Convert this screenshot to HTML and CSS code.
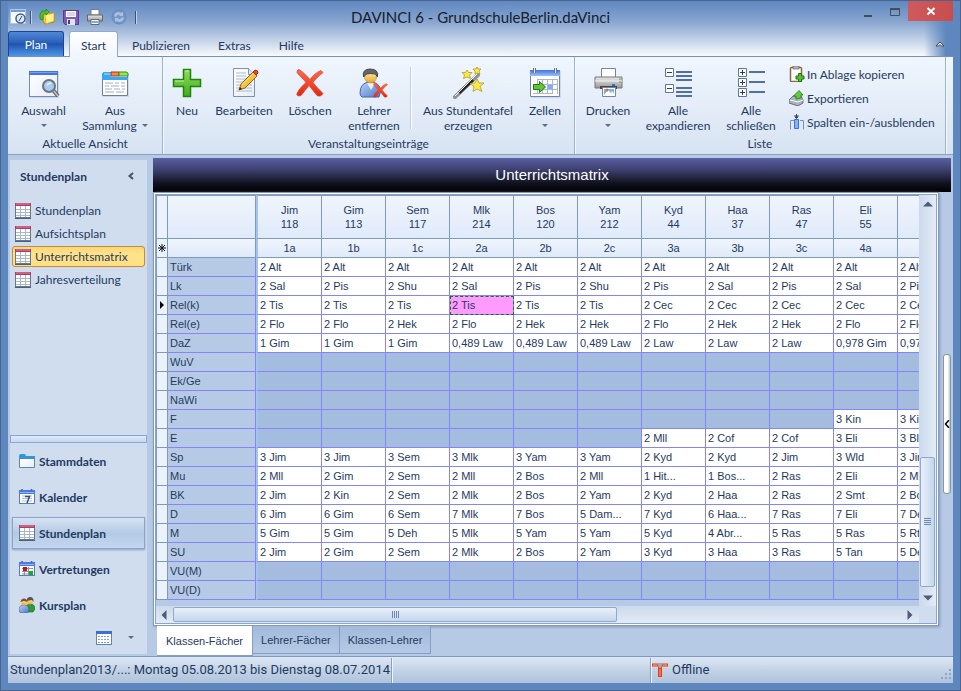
FILE: index.html
```html
<!DOCTYPE html>
<html lang="de">
<head>
<meta charset="utf-8">
<title>DAVINCI 6 - GrundschuleBerlin.daVinci</title>
<link rel="stylesheet" href="styles.css">
</head>
<body>
<svg class="defs" aria-hidden="true">
  <defs>
    <linearGradient id="gBlue" x1="0" y1="0" x2="0" y2="1"><stop offset="0" stop-color="#3f74dc"/><stop offset="1" stop-color="#9cc0fa"/></linearGradient>
    <linearGradient id="gPaper" x1="0" y1="0" x2="1" y2="1"><stop offset="0" stop-color="#fff"/><stop offset="1" stop-color="#e6edf7"/></linearGradient>
    <linearGradient id="gGreen" x1="0" y1="0" x2="0" y2="1"><stop offset="0" stop-color="#8fdc5c"/><stop offset="1" stop-color="#3fae1c"/></linearGradient>
    <linearGradient id="gRed" x1="0" y1="0" x2="0" y2="1"><stop offset="0" stop-color="#ff6a4c"/><stop offset="1" stop-color="#e02a10"/></linearGradient>
    <linearGradient id="gGrey" x1="0" y1="0" x2="0" y2="1"><stop offset="0" stop-color="#e8e8e8"/><stop offset="1" stop-color="#9a9a9a"/></linearGradient>
    <linearGradient id="gFace" x1="0" y1="0" x2="0" y2="1"><stop offset="0" stop-color="#fff0a8"/><stop offset="1" stop-color="#eba52c"/></linearGradient>
    <linearGradient id="gCoat" x1="0" y1="0" x2="1" y2="1"><stop offset="0" stop-color="#b9d2fa"/><stop offset="1" stop-color="#4c78c8"/></linearGradient>
  </defs>
  <symbol id="table" viewBox="0 0 16 16">
    <rect x=".5" y=".5" width="15" height="14" fill="#fff" stroke="#66788f"/>
    <path d="M0 0h16v3H0z" fill="#b33a62"/><path d="M1 1h14" stroke="#de8ba6"/>
    <path d="M1 6.500h14M1 9.500h14M1 12.500h14M5.500 3v11M10.500 3v11" stroke="#aab7cb"/>
    <path d="M0 15.500h16" stroke="#4d6078"/>
  </symbol>
  <symbol id="calmini" viewBox="0 0 16 16">
    <rect x=".5" y="1.500" width="15" height="13" fill="#fff" stroke="#5c7cae"/>
    <path d="M0 1h16v4H0z" fill="#4a7be0"/><path d="M1 3.500h14" stroke="#8fb4fa"/>
    <path d="M3 1.500v-1.500M12.500 1.500v-1.500" stroke="#4c6488" stroke-width="1.500"/>
  </symbol>
  <symbol id="x" viewBox="0 0 28 28">
    <path d="M3 1C8 4 11 8 14 11C17 7 20 4 25 2L27 4C22 8 19 11 17 14C20 18 24 22 27 25C25 28 23 28 21 27C18 24 16 20 13 17C10 20 8 24 5 27C3 28 0 27 1 25C3 20 7 17 10 14C7 10 4 8 1 4Q1 1 3 1Z" fill="url(#gRed)" stroke="#dc3a20" stroke-width=".7"/>
  </symbol>
</svg>

<div class="window">
  <header class="titlebar">
    <div class="quick">
      <button aria-label="Ansicht"><svg width="16" height="16" viewBox="0 0 16 16"><rect x=".5" y=".5" width="15" height="14" fill="#f4faff" stroke="#a8c8ea"/><path d="M1 1h14v2H1z" fill="#6f9fe0"/><circle cx="10.500" cy="9.500" r="4.500" fill="#dcecff" stroke="#4e5e74" stroke-width="1.500"/><path d="M9 12l3-5" stroke="#33455d"/></svg></button>
      <span class="qsep"></span>
      <button aria-label="Öffnen"><svg width="16" height="16" viewBox="0 0 16 16"><path d="M4 3h6l1 2h4v8l-9 2-2-3z" fill="#f2d33a" stroke="#a88a10"/><path d="M6 6l9-2v8l-8 3z" fill="#fff28c" stroke="#c7a51b" stroke-width=".7"/><path d="M1 10V5l2-3h4V0l3 3-3 3V4L4 6v5z" fill="#4fc22c" stroke="#237c10" stroke-width=".7"/></svg></button>
      <button aria-label="Speichern"><svg width="16" height="16" viewBox="0 0 16 16"><path d="M.5 1.500h15v14H2l-1.500-2z" fill="#7e5bb5" stroke="#563a8c"/><path d="M3 2h10v6H3z" fill="#fff"/><path d="M4 4h8M4 6h8" stroke="#b8a9d4"/><path d="M4 10h8v6H4z" fill="#dfe3ea"/><path d="M5 11h2v4H5z" fill="#4b3a78"/></svg></button>
      <button aria-label="Drucken"><svg width="16" height="16" viewBox="0 0 16 16"><path d="M4 .5h8V6H4z" fill="#fff" stroke="#778"/><path d="M.5 6h15v6H.5z" fill="url(#gGrey)" stroke="#666"/><path d="M4 10.500h8v5H4z" fill="#fff" stroke="#667"/><path d="M5 13h6" stroke="#78aee0" stroke-width="2"/></svg></button>
      <button aria-label="Aktualisieren" disabled><svg width="16" height="16" viewBox="0 0 16 16"><circle cx="8" cy="8" r="7" fill="#7596c4" stroke="#6687b8"/><path d="M3 7q1-4 5-4l2 1 2-1v4H8l1-1Q6 5 5 8zM13 9q-1 4-5 4l-2-1-2 1V9h4l-1 1q3 1 4-2z" fill="#a9c0df"/></svg></button>
      <span class="qsep"></span>
    </div>
    <h1>DAVINCI 6 - GrundschuleBerlin.daVinci</h1>
    <div class="winbtns">
      <button aria-label="Minimieren"><svg width="10" height="12"><path d="M1 10h8v2H1z" fill="#454d59"/></svg></button>
      <button aria-label="Maximieren"><svg width="10" height="12"><path d="M.5 4v6.500h9V4" fill="none" stroke="#454d59"/><path d="M0 3h10v2H0z" fill="#454d59"/></svg></button>
      <button class="close" aria-label="Schließen"><svg width="10" height="10"><path d="M1.500 2l7 6.500M8.500 2l-7 6.500" stroke="#fff" stroke-width="2"/></svg></button>
    </div>
  </header>

  <nav class="tabs">
    <button class="plan">Plan</button>
    <button class="tab active">Start</button>
    <button class="tab">Publizieren</button>
    <button class="tab">Extras</button>
    <button class="tab">Hilfe</button>
    <button class="fold" aria-label="Menüband minimieren"><svg width="10" height="8"><path d="M1 6l4-4 4 4H6.500L5 4.500 3.500 6z" fill="#fff" stroke="#3b4756"/></svg></button>
  </nav>

  <section class="ribbon">
    <div class="group view">
      <div class="tools">
        <button class="tool"><svg width="32" height="32" viewBox="0 0 32 32"><path d="M2 4h29v27H2z" fill="#b8c4d4" opacity=".5"/><rect x="1.500" y="4.500" width="28" height="25" fill="url(#gPaper)" stroke="#6f8cc0"/><path d="M1 4h29v4H1z" fill="#4474dc"/><path d="M2 5.500h27" stroke="#79a0f0"/><path d="M25 23l5 6" stroke="#66686c" stroke-width="4"/><path d="M25 23l5 6" stroke="#c0c2c6" stroke-width="1.500"/><circle cx="21" cy="19" r="6" fill="#a8ccf0" stroke="#6d747e" stroke-width="2"/><path d="M18 19q2-5 6-3z" fill="#eef7ff"/></svg><span>Auswahl</span><i class="arrow"></i></button>
        <button class="tool"><svg width="32" height="32" viewBox="0 0 32 32"><path d="M4 6h26v24H4z" fill="#b8c4d4" opacity=".5"/><path d="M3.500 7.500q0-2 2-2h21q2 0 2 2v21h-25z" fill="#fff" stroke="#6f7f98"/><path d="M3 8q0-3 3-3h5l1 5h17v3H3z" fill="#36a8f4"/><path d="M5 7h6" stroke="#b6e2ff"/><path d="M12 5h8v4h-8z" fill="#ee8c46" stroke="#a8381c"/><path d="M20 5h7q2 0 2 2v2h-9z" fill="#9ce24a" stroke="#3c8c20"/><path d="M6 16h8m2 0h4m2 0h4M6 19h4m2 0h8m2 0h4M6 22h7m2 0h6m2 0h3M6 25h9m2 0h8" stroke="#9eaccc"/></svg><span>Aus<br>Sammlung <i class="arrow inline"></i></span></button>
      </div>
      <h2>Aktuelle Ansicht</h2>
    </div>
    <div class="group entries">
      <div class="tools">
        <button class="tool"><svg width="32" height="32" viewBox="0 0 32 32"><path d="M12.500 2.500h7v10h10v7h-10v10h-7v-10h-10v-7h10z" fill="url(#gGreen)" stroke="#23820f" stroke-width="1.500"/><path d="M14 4h4M4 14h9" stroke="#c6f2a2"/></svg><span>Neu</span></button>
        <button class="tool"><svg width="32" height="32" viewBox="0 0 32 32"><path d="M5.500 1.500h15l6 6v22h-21z" fill="url(#gPaper)" stroke="#8391aa"/><path d="M20.500 1.500v6h6" fill="#dce6f4" stroke="#8391aa"/><path d="M8 6h10M8 9h10M8 12h16M8 15h16M8 18h16M8 21h16M8 24h16" stroke="#abb9cf"/><path d="M11 23l2-6L25 5l4 4-12 12z" fill="#f6c23e" stroke="#94661c"/><path d="M14 18L26 6" stroke="#ffe89a"/><path d="M25 5l2-2q3 0 3 3l-2 2z" fill="#e4442c" stroke="#b4301c"/><path d="M11 23l1-3 2 2z" fill="#222"/></svg><span>Bearbeiten</span></button>
        <button class="tool"><svg width="32" height="32" viewBox="0 0 32 32"><use href="#x" x="2" y="1" width="28" height="29"/></svg><span>Löschen</span></button>
        <button class="tool"><svg width="32" height="32" viewBox="0 0 32 32"><path d="M2 26q0-10 9-11h3q7 1 9 8l-2 7H4q-2-1-2-4z" fill="url(#gCoat)" stroke="#4469a6"/><path d="M9 16l4 7 4-7z" fill="#eaf2ff"/><circle cx="12.500" cy="10" r="6" fill="url(#gFace)" stroke="#b88a38" stroke-width=".6"/><path d="M5.500 10Q4 2 12 2q9 0 7.500 8l-2-3q-6-1-9 0z" fill="#666" stroke="#474747"/><use href="#x" x="15" y="15" width="15" height="16"/></svg><span>Lehrer<br>entfernen</span></button>
        <span class="divider"></span>
        <button class="tool"><svg width="32" height="32" viewBox="0 0 32 32"><path d="M3 30L26 8" stroke="#8f9297" stroke-width="4" stroke-linecap="round"/><path d="M7 26L21 13" stroke="#252525" stroke-width="3"/><path d="M3 29L25 7" stroke="#f2f2f2"/><path d="M15 3l1.500 2.500 3.500 0-2.500 2.500 1 3.500-3.500-1.500-3.500 1.500 1-3.500-2.500-2.500h3.500zM25 0l1 2 3 0-2 2 1 3-3-1-2 1 0-3-2-2 3 0zM25 12l2 4 5 0-4 3.500 2 5-5-2.500-4 2.500 1-5-4-3 5-.5z" fill="#fbe84a" stroke="#b49b20" stroke-width=".8"/></svg><span>Aus Stundentafel<br>erzeugen</span></button>
        <button class="tool"><svg width="32" height="32" viewBox="0 0 32 32"><path d="M2 4h30v27H2z" fill="#b8c4d4" opacity=".5"/><path d="M1.500 3.500h29v26h-29z" fill="#fff" stroke="#6f86ac"/><path d="M1 3h30v6H1z" fill="url(#gBlue)"/><path d="M5.500 1v5M26.500 1v5" stroke="#687482" stroke-width="3"/><path d="M5.500 1v5M26.500 1v5" stroke="#e4e8ee"/><path d="M8.500 12v15M13.500 12v15M18.500 12v15M23.500 12v15M28.500 12v15M8 12.500h21M4 17.500h25M4 22.500h25M4 26.500h20" stroke="#a9b7cc"/><path d="M19 18h5v4h-5z" fill="#7eacff"/><path d="M4.500 17.500h6v-3l6 5.500-6 5.500v-3h-6z" fill="#5fc436" stroke="#287612"/></svg><span>Zellen</span><i class="arrow"></i></button>
      </div>
      <h2>Veranstaltungseinträge</h2>
    </div>
    <div class="group list">
      <div class="tools">
        <button class="tool"><svg width="32" height="32" viewBox="0 0 32 32"><path d="M9.500 1.500h14v10h-14z" fill="#fff" stroke="#7a8595"/><path d="M3 10h27v11H3z" fill="url(#gGrey)" stroke="#777"/><path d="M3 14h27" stroke="#f5f5f5"/><path d="M8 19h17v3H8z" fill="#454545"/><path d="M10.500 20.500h13v9h-13z" fill="#fff" stroke="#7a8595"/><path d="M12 22h10v6H12z" fill="#72b6ea"/><path d="M12 28l4-5 3 3 1-2 3 4z" fill="#fff"/><circle cx="15" cy="23" r="1.500" fill="#ec6338"/><path d="M20 18h3" stroke="#3a68d8" stroke-width="2"/><path d="M27 12h2M27 15h2" stroke="#50b13a"/></svg><span>Drucken</span><i class="arrow"></i></button>
        <button class="tool"><svg width="32" height="32" viewBox="0 0 32 32"><path d="M3.500 1.500h8v8h-8zM3.500 17.500h8v8h-8z" fill="#fff" stroke="#60779b"/><path d="M5 5.500h5M5 21.500h5" stroke="#293e60"/><path d="M14 5h16M14 9h16M14 13h16M14 21h16M14 25h16M14 29h16" stroke="#526f9e" stroke-width="2"/></svg><span>Alle<br>expandieren</span></button>
        <button class="tool"><svg width="32" height="32" viewBox="0 0 32 32"><path d="M3.500 1.500h8v8h-8zM3.500 11.500h8v8h-8zM3.500 21.500h8v8h-8z" fill="#fff" stroke="#60779b"/><path d="M5 5.500h5M7.500 3v5M5 15.500h5M7.500 13v5M5 25.500h5M7.500 23v5" stroke="#293e60"/><path d="M14 5h16M14 15h16M14 25h16" stroke="#526f9e" stroke-width="2"/></svg><span>Alle<br>schließen</span></button>
        <div class="stack">
          <button><svg width="16" height="16" viewBox="0 0 16 16"><rect x="1.500" y="1.500" width="11" height="14" rx="1" fill="#fff" stroke="#8c6a3a" stroke-width="1.500"/><path d="M4 0h6v3H4z" fill="#b4b8bc" stroke="#555" stroke-width=".6"/><path d="M9.500 7.500h3v2.500h2.500v3h-2.500v2.500h-3v-2.500h-2.500v-3h2.500z" fill="#58c02c" stroke="#1f7410"/></svg>In Ablage kopieren</button>
          <button><svg width="16" height="16" viewBox="0 0 16 16"><path d="M0 10l4-4h8l2 4v3l-5 3-9-3z" fill="#a8b0b8" stroke="#525e68" stroke-width=".8"/><path d="M1 10l8 2 5-2" stroke="#fff" fill="none"/><path d="M7 9V6H4.500L10 .5 14 5h-2v3z" fill="#5dcc3a" stroke="#247c14" stroke-width=".8"/></svg>Exportieren</button>
          <button><svg width="16" height="16" viewBox="0 0 16 16"><path d="M1.500 15.500V6.500H5M14.500 15.500V6.500H11" fill="none" stroke="#7d92b4"/><path d="M5.500 5.500h4v9h-4z" fill="#84b0ff" stroke="#4372cc"/><path d="M7.500 0v4M5 2h5M6 3l1.500 1.500L9 3z" stroke="#37465d" fill="#37465d"/></svg>Spalten ein-/ausblenden</button>
        </div>
      </div>
      <h2>Liste</h2>
    </div>
  </section>

  <div class="body">
    <aside class="nav">
      <div class="navhead"><h3>Stundenplan</h3><svg width="6" height="8"><path d="M5 1L1.500 4 5 7" fill="none" stroke="#44536b" stroke-width="2"/></svg></div>
      <div class="links">
        <a href="#"><svg width="16" height="16"><use href="#table"/></svg>Stundenplan</a>
        <a href="#"><svg width="16" height="16"><use href="#table"/></svg>Aufsichtsplan</a>
        <a href="#" class="on"><svg width="16" height="16"><use href="#table"/></svg>Unterrichtsmatrix</a>
        <a href="#"><svg width="16" height="16"><use href="#table"/></svg>Jahresverteilung</a>
      </div>
      <div class="splitter"></div>
      <div class="areas">
        <button><svg width="16" height="16" viewBox="0 0 16 16"><path d="M0 3q0-2 2-2h4l1 2h9v4H0z" fill="#239ce4"/><path d="M.5 5.500h15v9H.5z" fill="url(#gPaper)" stroke="#66839e"/></svg>Stammdaten</button>
        <button><svg width="16" height="16" viewBox="0 0 16 16"><use href="#calmini"/><path d="M3 7h10M3 9.500h10M3 12h10" stroke="#aebdd2"/><path d="M6 7.500h4.500L8 14" fill="none" stroke="#344e84" stroke-width="1.500"/></svg>Kalender</button>
        <button class="on"><svg width="16" height="16"><use href="#table"/></svg>Stundenplan</button>
        <button><svg width="16" height="16" viewBox="0 0 16 16"><use href="#calmini"/><path d="M3 7.500h11M3 10.500h11M3 13h11M5.500 6v8M9.500 6v8" stroke="#8495ad"/><path d="M4 6h4v4H4z" fill="#d80c0c"/><path d="M10 10h4v4h-4z" fill="#10ad24"/></svg>Vertretungen</button>
        <button><svg width="16" height="16" viewBox="0 0 16 16"><path d="M7 12q0-5 4-5 5 0 5 5l-2 3H9z" fill="#2c9b31" stroke="#176a1b" stroke-width=".6"/><circle cx="11" cy="4.500" r="3" fill="url(#gFace)"/><path d="M7.500 4Q8 0 11 0q4 0 3.500 5L13 3z" fill="#555"/><path d="M0 13q0-5 5-5t5 5q0 3-3 3H3q-3 0-3-3z" fill="url(#gCoat)" stroke="#3c61a0" stroke-width=".6"/><circle cx="5" cy="5.500" r="3" fill="url(#gFace)"/><path d="M1.500 5Q2 1.500 5 1.500T8.500 5L5 4z" fill="#8b4e1e"/></svg>Kursplan</button>
      </div>
      <div class="navfoot">
        <svg width="16" height="14" viewBox="0 0 16 14"><rect x=".5" y=".5" width="15" height="13" fill="#fff" stroke="#6482b4"/><path d="M0 0h16v3H0z" fill="#3c6ed0"/><path d="M2 5.500h12M2 8.500h12M2 11.500h12" stroke="#86a2cf" stroke-dasharray="2 1"/></svg>
        <i class="arrow"></i>
      </div>
    </aside>

    <main>
      <h2 class="banner">Unterrichtsmatrix</h2>
      <div class="work">
        <div class="pane">
          <div class="frame">
            <div class="gridrow">
              <div class="clip">
                <table>
                  <colgroup><col class="mark"><col class="subject"><col class="first"><col span="10"></colgroup>
                  <thead>
                    <tr class="teachers"><th></th><th></th><th>Jim<br>118</th><th>Gim<br>113</th><th>Sem<br>117</th><th>Mlk<br>214</th><th>Bos<br>120</th><th>Yam<br>212</th><th>Kyd<br>44</th><th>Haa<br>37</th><th>Ras<br>47</th><th>Eli<br>55</th><th></th></tr>
                    <tr><th><svg width="8" height="8"><path d="M4 0v8M0 4h8M1 1l6 6M7 1L1 7" stroke="#111"/></svg></th><th></th><th>1a</th><th>1b</th><th>1c</th><th>2a</th><th>2b</th><th>2c</th><th>3a</th><th>3b</th><th>3c</th><th>4a</th><th></th></tr>
                  </thead>
                  <tbody>
                    <tr><th></th><th>Türk</th><td>2 Alt</td><td>2 Alt</td><td>2 Alt</td><td>2 Alt</td><td>2 Alt</td><td>2 Alt</td><td>2 Alt</td><td>2 Alt</td><td>2 Alt</td><td>2 Alt</td><td>2 Alt</td></tr>
                    <tr><th></th><th>Lk</th><td>2 Sal</td><td>2 Pis</td><td>2 Shu</td><td>2 Sal</td><td>2 Pis</td><td>2 Shu</td><td>2 Pis</td><td>2 Sal</td><td>2 Pis</td><td>2 Sal</td><td>2 Pis</td></tr>
                    <tr><th><svg width="4" height="8"><path d="M0 0l4 4-4 4z" fill="#000"/></svg></th><th>Rel(k)</th><td>2 Tis</td><td>2 Tis</td><td>2 Tis</td><td class="sel">2 Tis</td><td>2 Tis</td><td>2 Tis</td><td>2 Cec</td><td>2 Cec</td><td>2 Cec</td><td>2 Cec</td><td>2 Cec</td></tr>
                    <tr><th></th><th>Rel(e)</th><td>2 Flo</td><td>2 Flo</td><td>2 Hek</td><td>2 Flo</td><td>2 Hek</td><td>2 Hek</td><td>2 Flo</td><td>2 Hek</td><td>2 Hek</td><td>2 Flo</td><td>2 Flo</td></tr>
                    <tr><th></th><th>DaZ</th><td>1 Gim</td><td>1 Gim</td><td>1 Gim</td><td>0,489 Law</td><td>0,489 Law</td><td>0,489 Law</td><td>2 Law</td><td>2 Law</td><td>2 Law</td><td>0,978 Gim</td><td>0,978 Gim</td></tr>
                    <tr><th></th><th>WuV</th><td></td><td></td><td></td><td></td><td></td><td></td><td></td><td></td><td></td><td></td><td></td></tr>
                    <tr><th></th><th>Ek/Ge</th><td></td><td></td><td></td><td></td><td></td><td></td><td></td><td></td><td></td><td></td><td></td></tr>
                    <tr><th></th><th>NaWi</th><td></td><td></td><td></td><td></td><td></td><td></td><td></td><td></td><td></td><td></td><td></td></tr>
                    <tr><th></th><th>F</th><td></td><td></td><td></td><td></td><td></td><td></td><td></td><td></td><td></td><td>3 Kin</td><td>3 Kin</td></tr>
                    <tr><th></th><th>E</th><td></td><td></td><td></td><td></td><td></td><td></td><td>2 Mll</td><td>2 Cof</td><td>2 Cof</td><td>3 Eli</td><td>3 Blk</td></tr>
                    <tr><th></th><th>Sp</th><td>3 Jim</td><td>3 Jim</td><td>3 Sem</td><td>3 Mlk</td><td>3 Yam</td><td>3 Yam</td><td>2 Kyd</td><td>2 Kyd</td><td>2 Jim</td><td>3 Wld</td><td>3 Jim</td></tr>
                    <tr><th></th><th>Mu</th><td>2 Mll</td><td>2 Gim</td><td>2 Sem</td><td>2 Mll</td><td>2 Bos</td><td>2 Mll</td><td>1 Hit...</td><td>1 Bos...</td><td>2 Ras</td><td>2 Eli</td><td>2 Mlk</td></tr>
                    <tr><th></th><th>BK</th><td>2 Jim</td><td>2 Kin</td><td>2 Sem</td><td>2 Mlk</td><td>2 Bos</td><td>2 Yam</td><td>2 Kyd</td><td>2 Haa</td><td>2 Ras</td><td>2 Smt</td><td>2 Bos</td></tr>
                    <tr><th></th><th>D</th><td>6 Jim</td><td>6 Gim</td><td>6 Sem</td><td>7 Mlk</td><td>7 Bos</td><td>5 Dam...</td><td>7 Kyd</td><td>6 Haa...</td><td>7 Ras</td><td>7 Eli</td><td>7 Deh</td></tr>
                    <tr><th></th><th>M</th><td>5 Gim</td><td>5 Gim</td><td>5 Deh</td><td>5 Mlk</td><td>5 Yam</td><td>5 Yam</td><td>5 Kyd</td><td>4 Abr...</td><td>5 Ras</td><td>5 Ras</td><td>5 Rt</td></tr>
                    <tr><th></th><th>SU</th><td>2 Jim</td><td>2 Gim</td><td>2 Sem</td><td>2 Mlk</td><td>2 Bos</td><td>2 Yam</td><td>3 Kyd</td><td>3 Haa</td><td>3 Ras</td><td>5 Tan</td><td>5 Deh</td></tr>
                    <tr><th></th><th>VU(M)</th><td></td><td></td><td></td><td></td><td></td><td></td><td></td><td></td><td></td><td></td><td></td></tr>
                    <tr><th></th><th>VU(D)</th><td></td><td></td><td></td><td></td><td></td><td></td><td></td><td></td><td></td><td></td><td></td></tr>
                  </tbody>
                </table>
              </div>
              <div class="vbar">
                <svg width="10" height="6"><path d="M0 5.500l5-5 5 5z" fill="#4d5b7c"/></svg>
                <div class="vtrack"><div class="vthumb"><i></i></div></div>
                <svg width="10" height="6"><path d="M0 .5h10l-5 5z" fill="#4d5b7c"/></svg>
              </div>
            </div>
            <div class="hrow">
              <div class="hbar">
                <svg width="6" height="10"><path d="M5.500 0v10l-5-5z" fill="#4d5b7c"/></svg>
                <div class="htrack"><div class="hthumb"><i></i></div></div>
                <svg width="6" height="10"><path d="M.5 0v10l5-5z" fill="#4d5b7c"/></svg>
              </div>
              <div class="corner"></div>
            </div>
          </div>
          <div class="sheets">
            <button class="on">Klassen-Fächer</button>
            <button>Lehrer-Fächer</button>
            <button>Klassen-Lehrer</button>
          </div>
        </div>
        <div class="side"><button class="grip" aria-label="Seitenbereich einblenden"><svg width="6" height="8"><path d="M5 0L1.500 4 5 8" fill="none" stroke="#000" stroke-width="1.500"/></svg></button></div>
      </div>
    </main>
  </div>

  <footer class="status">
    <span class="period">Stundenplan2013/...: Montag 05.08.2013 bis Dienstag 08.07.2014</span>
    <span class="blank"></span>
    <span class="net"><svg width="16" height="16" viewBox="0 0 16 16"><path d="M0 1.500h16v3H0zM6 3h4v12H6z" fill="#e8391c"/><path d="M1 3h4M11 3h4M8 7v7" stroke="#ffaf8e"/><path d="M5 1h6L9 6H7z" fill="#a8a8a0"/></svg>Offline</span>
    <svg class="size" width="12" height="12"><path d="M9 1h2v2H9zM5 5h2v2H5zM9 5h2v2H9zM1 9h2v2H1zM5 9h2v2H5zM9 9h2v2H9z" fill="#8ba5cd"/></svg>
  </footer>
</div>
</body>
</html>
```
FILE: styles.css
```css
* { box-sizing: border-box; }
html, body { height: 100%; }
body { margin: 0; font: 12px/15px Lato, "Open Sans", sans-serif; color: #1f3a61; }
h1, h2, h3 { margin: 0; font-weight: 400; font-size: 12px; }
button { margin: 0; padding: 0; border: 0; background: none; font: inherit; color: inherit; }
svg { display: block; flex: none; }
a { color: inherit; text-decoration: none; }
.defs { position: absolute; width: 0; height: 0; }

.window {
  min-height: 100vh; display: flex; flex-direction: column;
  border: 1px solid #48658f; padding: 0 7px 7px;
  background: linear-gradient(to right, #fff0 calc(100% - 36px), #5e87bf calc(100% - 14px)) 0 0 / 100% 57px no-repeat,
    linear-gradient(#6088c0, #86a4cf 35%, #c6d4e9 70%, #fff) 7px 0 / calc(100% - 14px) 57px no-repeat, #5e87bf;
}

.titlebar { display: grid; grid-template-columns: 1fr auto 1fr; height: 30px; }
.quick { display: flex; align-items: center; gap: 8px; padding: 2px 0 0 2px; }
.quick .qsep { width: 2px; height: 13px; border-left: 1px solid #40516c; border-right: 1px solid #c3d2e8; }
.quick .qsep:first-of-type { margin: 0 -1px 0 -4px; }
.titlebar h1 { font-size: 15px; line-height: 18px; color: #16202e; padding-top: 7px; }
.winbtns { display: flex; justify-content: flex-end; height: 20px; }
.winbtns button { width: 27px; display: flex; justify-content: center; align-items: center; }
.winbtns .close { width: 45px; background: linear-gradient(to right, #cf5a5c, #c84d4d); }

.tabs { display: flex; height: 26px; align-items: flex-end; border-bottom: 1px solid #7690bd; }
.plan { width: 56px; height: 25px; border: 1px solid #1c469c; border-bottom: 0; border-radius: 3px 3px 0 0; background: linear-gradient(#5088d8, #2a5fb8 45%, #1f54b0 50%, #4d97e6); color: #fff; margin-right: 5px; }
.tab { height: 25px; padding: 3px 14px 0; }
.tab.active { width: 49px; padding: 2px 0 0; height: 26px; margin-bottom: -1px; background: linear-gradient(#fff, #eff6fe); border: 1px solid #93a9cb; border-bottom: 0; border-radius: 3px 3px 0 0; }
.fold { margin: 0 8px 8px auto; }

.ribbon { display: flex; height: 98px; background: linear-gradient(#eff6fe, #e4edf8 50%, #d7e3f2); border-bottom: 1px solid #8b9fbe; }
.group { display: flex; flex-direction: column; border-right: 1px solid #9db1d0; box-shadow: 1px 0 #f6faff; }
.group h2 { text-align: center; line-height: 15px; }
.tools { display: grid; height: 79px; padding-top: 10px; }
.view .tools { grid-template-columns: 71px 72px 11px; }
.entries .tools { grid-template-columns: 48px 66px 66px 62px 10px 106px 48px 5px; }
.list .tools { grid-template-columns: 58px 82px 64px 1fr; padding-left: 4px; }
.list { width: 371px; }
.tool { display: flex; flex-direction: column; align-items: center; white-space: nowrap; }
.tool svg { margin-bottom: 4px; }
.arrow { display: block; width: 0; height: 0; border: 3px solid transparent; border-top-color: #5c6c86; border-bottom: 0; margin-top: 6px; }
.arrow.inline { display: inline-block; margin: 0 0 3px 2px; }
.divider { width: 2px; height: 62px; margin-left: 5px; border-left: 1px solid #c0cee2; border-right: 1px solid #fff; }
.stack { padding-left: 6px; margin-top: -5px; }
.stack button { display: flex; align-items: center; gap: 2px; height: 24px; white-space: nowrap; }

.body { flex: 1; display: flex; background: #b7cae5; padding: 3px 2px 0; }
.nav { width: 137px; flex: none; display: flex; flex-direction: column; background: #d0ddee; margin: 2px 6px 2px 0; }
.navhead { display: flex; justify-content: space-between; align-items: center; height: 32px; padding: 0 13px 0 10px; }
.navhead h3 { font-weight: 700; }
.links { flex: 1; padding: 8px 2px 0; }
.links a { display: flex; align-items: center; gap: 4px; height: 21px; margin-bottom: 2px; padding: 0 2px; border: 1px solid transparent; border-radius: 3px; white-space: nowrap; }
.links .on { border-color: #c78b35; background: linear-gradient(#fbd67c, #ffe38a 40%, #ffdf82); }
.splitter { height: 8px; border: 1px solid #8ba7d0; background: linear-gradient(#e0eafa, #c7d8f2); }
.areas { padding: 2px 2px 0; display: grid; gap: 4px; }
.areas button { display: flex; align-items: center; gap: 4px; height: 32px; padding-left: 6px; border: 1px solid transparent; font-weight: 700; }
.areas .on { border-color: #8ba4c9; background: linear-gradient(#d6e3f3, #b4cae4 50%, #c3d8ef); box-shadow: 0 1px 2px #8aa0c0; }
.navfoot { display: flex; align-items: center; justify-content: flex-end; gap: 16px; height: 33px; padding-right: 13px; }
.navfoot .arrow { margin: 0; }

main { flex: 1; min-width: 0; display: flex; flex-direction: column; }
.banner { height: 34px; font: 15px/34px "Liberation Sans", sans-serif; text-align: center; color: #fff; background: linear-gradient(#5b5fa2, #3d406e 35%, #10111e 75%, #000); }
.work { flex: 1; display: flex; min-width: 0; }
.pane { flex: 1; min-width: 0; display: flex; flex-direction: column; }
.frame { flex: 1; display: flex; flex-direction: column; padding: 1px; border: 1px solid #8099bf; background: #fff; box-shadow: 1px 1px 3px #8498b8; }
.gridrow { flex: 1; display: flex; border: 1px solid #8ba5ca; border-width: 1px 1px 0; background: #b7cae5; }
.clip { flex: 1; min-width: 0; overflow: hidden; padding-bottom: 5px; }

table { table-layout: fixed; width: 806px; border-collapse: separate; border-spacing: 0; font: 11px/14px "Liberation Sans", sans-serif; }
col { width: 64px; }
col.mark { width: 12px; }
col.subject { width: 88px; }
col.first { width: 66px; }
th, td { height: 19px; padding: 0 2px; border: 0 solid #8484fb; border-width: 0 1px 1px 0; font-weight: 400; white-space: nowrap; overflow: hidden; }
thead th { border-color: #8099bf; background: linear-gradient(#f0f5fc, #dfeafa); }
.teachers th { height: 44px; border-top-width: 1px; }
th svg { margin: auto; }
tbody th { text-align: left; background: #b7cae5; }
th:first-child { padding: 0 1px; border-left-width: 1px; border-color: #8099bf; background: #eaf2fb; }
td { text-align: left; background: #fff; }
td:empty { background: #a4bddf; }
tr > :nth-child(3) { border-left: 2px solid #a4c4ee; }
td.sel { background: #ff9aff; outline: 1px dashed #1e6b2a; outline-offset: -1px; }

.vbar { width: 17px; display: flex; flex-direction: column; align-items: center; padding: 6px 0 5px; background: linear-gradient(to right, #cbdaec, #e3ebf6); }
.vtrack { flex: 1; width: 15px; display: flex; flex-direction: column; justify-content: flex-end; padding: 8px 0; }
.vthumb { height: 35%; border: 1px solid #8ea9d0; border-radius: 2px; background: linear-gradient(to right, #e8f0fa, #c5d6ec); display: flex; align-items: center; justify-content: center; }
.vthumb i { width: 7px; height: 7px; background: repeating-linear-gradient(#6d88b3 0 1px, #fff0 1px 2px); }
.hrow { display: flex; height: 18px; border: 1px solid #8ba5ca; border-width: 0 1px 1px; }
.hbar { flex: 1; display: flex; align-items: center; padding: 0 6px 0 5px; background: linear-gradient(#cbdaec, #e3ebf6); }
.htrack { flex: 1; padding: 0 6px; }
.hthumb { width: 61%; height: 15px; border: 1px solid #8ea9d0; border-radius: 2px; background: linear-gradient(#e8f0fa, #c5d6ec); display: flex; align-items: center; justify-content: center; }
.hthumb i { width: 7px; height: 7px; background: repeating-linear-gradient(to right, #6d88b3 0 1px, #fff0 1px 2px); }
.corner { width: 17px; background: #d0ddee; }

.sheets { display: flex; height: 30px; padding-left: 4px; align-items: flex-start; font: 11px/14px "Liberation Sans", sans-serif; }
.sheets button { height: 28px; padding: 0 8px; border: 1px solid #849fc5; border-top: 0; border-left: 0; background: linear-gradient(#a2bbdb, #b4c9e4); }
.sheets .on { height: 30px; padding: 0 9px; background: #fff; z-index: 1; }
.side { width: 12px; flex: none; display: flex; align-items: center; justify-content: flex-end; }
.grip { width: 8px; height: 140px; border: 1px solid #8f9498; border-radius: 3px; background: linear-gradient(to right, #fff 60%, #a9cdd8); display: flex; align-items: center; justify-content: center; }

.status { display: flex; align-items: center; height: 27px; border-top: 1px solid #7f9abf; background: linear-gradient(#dce7f4, #c3d3e6 50%, #b0c3db); font: 13px/16px Roboto, sans-serif; }
.status > span { height: 25px; display: flex; align-items: center; border-right: 1px solid #8ba0bf; white-space: nowrap; }
.status .period { padding: 0 5px 0 2px; width: 384px; }
.status .blank { flex: 260; box-shadow: inset 1px 0 #eef4fb; }
.status .net { flex: 289; gap: 4px; padding-left: 1px; border-right: 0; box-shadow: inset 1px 0 #eef4fb; }
.size { align-self: flex-end; margin: 0 1px 3px; }
```
